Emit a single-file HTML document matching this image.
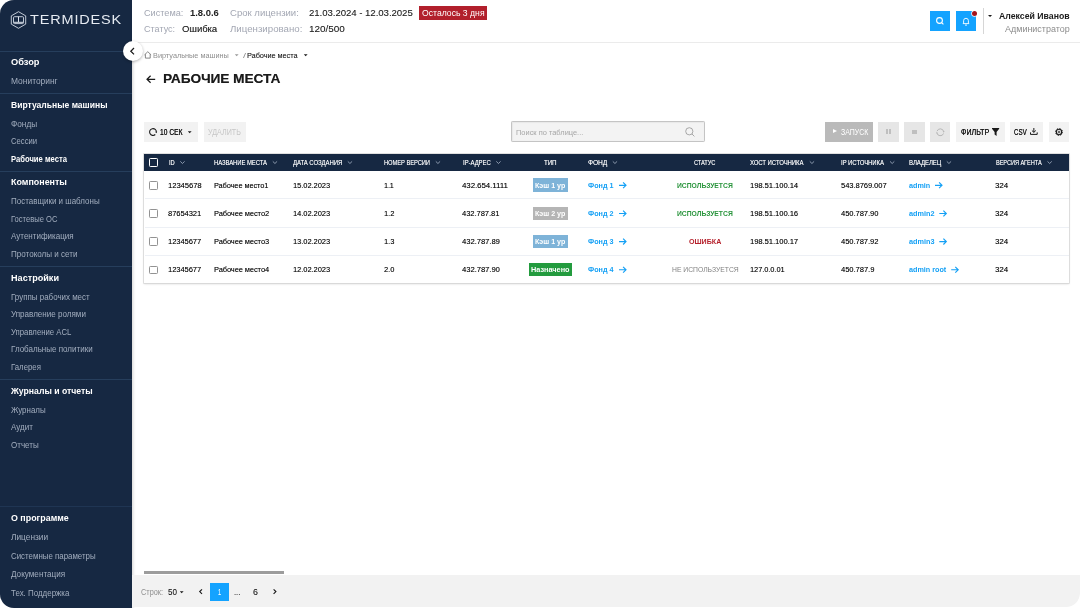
<!DOCTYPE html>
<html lang="ru">
<head>
<meta charset="utf-8">
<title>Termidesk — Рабочие места</title>
<style>
*{box-sizing:border-box;margin:0;padding:0}
html,body{width:1080px;height:608px;overflow:hidden;background:#fff;font-family:"Liberation Sans",sans-serif;color:#1a1a1a}
#app{position:absolute;left:0;top:0;width:1080px;height:608px;border-radius:14px;overflow:hidden;background:#fff}
.a{position:absolute}
.t{position:absolute;white-space:nowrap;line-height:1.2;transform-origin:0 50%}
svg{position:absolute;overflow:visible}
#side{position:absolute;left:0;top:0;width:132px;height:608px;background:#162842;box-shadow:1px 0 3px rgba(0,0,0,.18)}
.ln{position:absolute;left:0;width:132px;height:1px;background:#263e5c}
#hdr{position:absolute;left:132px;top:0;width:948px;height:43px;background:#fff;border-bottom:1px solid #ebebeb}
.sq{position:absolute;top:10.6px;width:20.3px;height:20.4px;background:#14a3ff}
.btn{position:absolute;top:121.6px;height:20.3px;background:#f2f2f2}
#tbl{position:absolute;left:143.9px;top:153.6px;width:924.9px;height:129.8px;background:#fff;box-shadow:0 0 0 0.7px #d4d4d4,0 1px 2px rgba(0,0,0,.16)}
#th{position:absolute;left:0;top:0;width:100%;height:17.1px;background:#162842}
.rl{position:absolute;left:144.5px;width:924px;height:1.3px;background:#edf0f5}
.cb{position:absolute;left:149px;width:8.6px;height:8.6px;border:1px solid #929292;border-radius:1.3px;background:#fff}
.tag{position:absolute;height:13.4px}
#ftr{position:absolute;left:132px;top:575px;width:948px;height:32.2px;background:#f2f2f2;border-bottom-right-radius:14px}
#tx{position:absolute;left:0;top:0;width:1080px;height:608px;will-change:transform}

</style>
</head>
<body>
<div id="app">
<!-- SIDEBAR -->
<div id="side">
  <div class="ln" style="top:50.5px"></div>
  <div class="ln" style="top:93.2px"></div>
  <div class="ln" style="top:170.9px"></div>
  <div class="ln" style="top:265.9px"></div>
  <div class="ln" style="top:378.9px"></div>
  <div class="ln" style="top:506px;background:#1f3553"></div>
</div>
<svg style="left:10px;top:11px" width="17" height="18" viewBox="0 0 17 18" fill="none" stroke="#dfe5ee" stroke-width="0.85">
  <path d="M8.5 0.7 L15.7 4.85 V13.15 L8.5 17.3 L1.3 13.15 V4.85 Z"/>
  <rect x="3.5" y="5.7" width="10" height="6.9" rx="1"/>
  <path d="M8.5 5.7 V11 M3.7 11.3 H13.3" stroke-width="1"/>
</svg>

<!-- HEADER -->
<div id="hdr"></div>
<div class="a" style="left:419px;top:6.2px;width:67.6px;height:13.4px;background:#b2202c"></div>
<div class="sq" style="left:930px"></div>
<svg style="left:936.4px;top:17.2px" width="8" height="8" viewBox="0 0 8 8" fill="none" stroke="#fff" stroke-width="1.1"><circle cx="3.5" cy="3.5" r="2.9"/><path d="M5.6 5.6 L7.4 7.4"/></svg>
<div class="sq" style="left:956px"></div>
<svg style="left:962px;top:16.6px" width="8" height="9" viewBox="0 0 8 9" fill="none" stroke="#fff" stroke-width="0.9"><path d="M1.6 6.4 V3.7 A2.4 2.4 0 0 1 6.4 3.7 V6.4 M0.8 6.6 H7.2 M3 8.1 H5"/></svg>
<div class="a" style="left:972.4px;top:11px;width:5px;height:5px;border-radius:50%;background:#a3141c;box-shadow:0 0 0 0.7px #fff"></div>
<div class="a" style="left:982.9px;top:7.5px;width:1px;height:26.4px;background:#d6d6d6"></div>
<svg style="left:988.1px;top:14.5px" width="5" height="3" viewBox="0 0 5 3"><path d="M0 0 H4.1 L2.05 2.1 Z" fill="#1a1a1a"/></svg>

<!-- COLLAPSE BUTTON -->
<div class="a" style="left:122.7px;top:41px;width:20px;height:20px;border-radius:50%;background:#fff;box-shadow:0 1px 3px rgba(0,0,0,.3)"></div>
<svg style="left:129px;top:47px" width="7" height="8" viewBox="0 0 7 8" fill="none" stroke="#1a1a1a" stroke-width="1.25"><path d="M5 1 L1.8 4.2 L5 7.4"/></svg>

<!-- BREADCRUMBS -->
<svg style="left:144.4px;top:51.2px" width="8" height="8" viewBox="0 0 8 8" fill="none" stroke="#7f7f7f" stroke-width="0.95" stroke-linejoin="round"><path d="M0.5 3.9 L3.8 0.7 L7.1 3.9 M1.4 3.2 V7.1 H6.2 V3.2"/></svg>
<svg style="left:235.0px;top:54.2px" width="4" height="2" viewBox="0 0 4 2"><path d="M-0.2 0.2 H3.6 L1.7 2.3 Z" fill="#9a9a9a"/></svg>
<svg style="left:303.9px;top:54.2px" width="4" height="2" viewBox="0 0 4 2"><path d="M-0.2 0.2 H3.6 L1.7 2.3 Z" fill="#1a1a1a"/></svg>

<!-- TITLE ARROW -->
<svg style="left:146px;top:74.8px" width="10" height="9" viewBox="0 0 10 9" fill="none" stroke="#1a1a1a" stroke-width="1.2"><path d="M9.2 4.3 H1.2 M4.6 0.8 L1 4.3 L4.6 7.8"/></svg>

<!-- TOOLBAR -->
<div class="btn" style="left:143.8px;width:54.6px"></div>
<svg style="left:148.8px;top:127.8px" width="8" height="8" viewBox="0 0 8 8" fill="none" stroke="#1a1a1a" stroke-width="1.05"><path d="M6.3 6.5 A3.4 3.4 0 1 1 7.37 4.3"/><path d="M6.2 3.7 H8.2 L7.3 5.3 Z" fill="#1a1a1a" stroke="none"/></svg>
<svg style="left:187.9px;top:131.2px" width="4" height="2" viewBox="0 0 4 2"><path d="M-0.2 0.2 H3.6 L1.7 2.3 Z" fill="#1a1a1a"/></svg>
<div class="btn" style="left:204.1px;width:41.8px"></div>

<div class="a" style="left:510.6px;top:121.3px;width:194.2px;height:20.6px;background:#f3f3f3;border:1px solid #c4c4c4;border-radius:1.2px;box-shadow:inset 0.5px 0.5px 1px rgba(0,0,0,.08)"></div>
<svg style="left:685px;top:126.8px" width="10" height="10" viewBox="0 0 10 10" fill="none" stroke="#8f8f8f" stroke-width="0.75"><circle cx="4.3" cy="4.3" r="3.6"/><path d="M7 7 L9.4 9.4"/></svg>

<div class="btn" style="left:825.4px;width:47.4px;background:#bababa"></div>
<div class="a" style="left:832.8px;top:129.3px;width:0;height:0;border-top:2.65px solid transparent;border-bottom:2.65px solid transparent;border-left:4.3px solid #fff"></div>
<div class="btn" style="left:878.2px;width:20.4px;background:#e6e6e6"></div>
<div class="a" style="left:885.9px;top:129.1px;width:2px;height:5.3px;background:#bfbfbf"></div>
<div class="a" style="left:889.1px;top:129.1px;width:2px;height:5.3px;background:#bfbfbf"></div>
<div class="btn" style="left:904.1px;width:20.5px;background:#e6e6e6"></div>
<div class="a" style="left:912.1px;top:129.7px;width:4.5px;height:4.4px;background:#bfbfbf"></div>
<div class="btn" style="left:930.1px;width:20.2px;background:#e6e6e6"></div>
<svg style="left:935.9px;top:127.7px" width="8.6" height="8.6" viewBox="0 0 9 9" fill="none" stroke="#b3b3b3" stroke-width="1"><path d="M1.12 3.27 A3.6 3.6 0 0 1 8.05 3.87 M7.88 5.73 A3.6 3.6 0 0 1 0.95 5.13"/><path d="M7.1 3.4 H9 L8.05 5 Z M0 5.6 H1.9 L0.95 4 Z" fill="#b3b3b3" stroke="none"/></svg>
<div class="btn" style="left:956px;width:48.8px"></div>
<svg style="left:992px;top:127.9px" width="8" height="8" viewBox="0 0 8 8" fill="#1a1a1a"><path d="M0 0 H7.2 V0.8 L4.6 3.9 V7.9 L2.6 6.6 V3.9 L0 0.8 Z"/></svg>
<div class="btn" style="left:1009.8px;width:33.6px"></div>
<svg style="left:1030.4px;top:128.2px" width="8" height="7" viewBox="0 0 8 7" fill="none" stroke="#1a1a1a" stroke-width="1"><path d="M3.85 0 V4.2 M1.9 2.5 L3.85 4.4 L5.8 2.5 M0.5 4.4 V6.4 H7.2 V4.4"/></svg>
<div class="btn" style="left:1048.8px;width:20.3px"></div>
<svg style="left:1054.9px;top:127.8px" width="8" height="8" viewBox="0 0 8 8" fill="none" stroke="#1a1a1a"><circle cx="4" cy="4" r="2.7" stroke-width="1.1"/><circle cx="4" cy="4" r="3.5" stroke-width="0.9" stroke-dasharray="1.3 1.45"/><circle cx="4" cy="4" r="0.9" stroke-width="0.8"/></svg>

<!-- TABLE -->
<div id="tbl">
  <div id="th"></div>
</div>
<div class="rl" style="top:198px"></div>
<div class="rl" style="top:226.6px"></div>
<div class="rl" style="top:254.9px"></div>
<div class="cb" style="top:158.2px;border:1.2px solid #fff;background:transparent"></div>
<div class="cb" style="top:181.1px"></div>
<div class="cb" style="top:209.3px"></div>
<div class="cb" style="top:237.4px"></div>
<div class="cb" style="top:265.6px"></div>
<div class="tag" style="left:533px;top:178.3px;width:34.8px;background:#7eb3d8"></div>
<div class="tag" style="left:533px;top:206.5px;width:34.8px;background:#b5b5b5"></div>
<div class="tag" style="left:533px;top:234.6px;width:34.8px;background:#7eb3d8"></div>
<div class="tag" style="left:528.8px;top:262.8px;width:43.2px;background:#239b3e"></div>
<svg width="1080" height="608" viewBox="0 0 1080 608" style="left:0;top:0" fill="none">
  <g stroke="#a9b6c9" stroke-width="0.8">
    <path transform="translate(180.3 161.4)" d="M0 0 L2.15 2.1 L4.3 0"/>
    <path transform="translate(272.8 161.4)" d="M0 0 L2.15 2.1 L4.3 0"/>
    <path transform="translate(347.8 161.4)" d="M0 0 L2.15 2.1 L4.3 0"/>
    <path transform="translate(435.8 161.4)" d="M0 0 L2.15 2.1 L4.3 0"/>
    <path transform="translate(496.3 161.4)" d="M0 0 L2.15 2.1 L4.3 0"/>
    <path transform="translate(612.8 161.4)" d="M0 0 L2.15 2.1 L4.3 0"/>
    <path transform="translate(809.8 161.4)" d="M0 0 L2.15 2.1 L4.3 0"/>
    <path transform="translate(890 161.4)" d="M0 0 L2.15 2.1 L4.3 0"/>
    <path transform="translate(946.8 161.4)" d="M0 0 L2.15 2.1 L4.3 0"/>
    <path transform="translate(1047.5 161.4)" d="M0 0 L2.15 2.1 L4.3 0"/>
  </g>
  <g stroke="#14a0f5" stroke-width="1.15">
    <path transform="translate(619 182.4)" d="M0 2.9 H6.8 M4.1 0 L7 2.9 L4.1 5.8"/>
    <path transform="translate(619 210.6)" d="M0 2.9 H6.8 M4.1 0 L7 2.9 L4.1 5.8"/>
    <path transform="translate(619 238.7)" d="M0 2.9 H6.8 M4.1 0 L7 2.9 L4.1 5.8"/>
    <path transform="translate(619 266.9)" d="M0 2.9 H6.8 M4.1 0 L7 2.9 L4.1 5.8"/>
    <path transform="translate(935 182.4)" d="M0 2.9 H6.8 M4.1 0 L7 2.9 L4.1 5.8"/>
    <path transform="translate(939.3 210.6)" d="M0 2.9 H6.8 M4.1 0 L7 2.9 L4.1 5.8"/>
    <path transform="translate(939.3 238.7)" d="M0 2.9 H6.8 M4.1 0 L7 2.9 L4.1 5.8"/>
    <path transform="translate(951.2 266.9)" d="M0 2.9 H6.8 M4.1 0 L7 2.9 L4.1 5.8"/>
  </g>
</svg>

<!-- FOOTER -->
<div class="a" style="left:143.8px;top:570.7px;width:140px;height:3.3px;background:#9c9c9c"></div>
<div id="ftr"></div>
<svg style="left:179.8px;top:591.2px" width="4" height="2" viewBox="0 0 4 2"><path d="M-0.2 0.2 H3.6 L1.7 2.3 Z" fill="#1a1a1a"/></svg>
<div class="a" style="left:210.4px;top:582.6px;width:18.5px;height:18.2px;background:#14a3ff"></div>
<svg style="left:198.5px;top:589.2px" width="4" height="6" viewBox="0 0 4 6" fill="none" stroke="#1a1a1a" stroke-width="1.15"><path d="M3 0.3 L0.7 2.6 L3 4.9"/></svg>
<svg style="left:272.8px;top:589.2px" width="4" height="6" viewBox="0 0 4 6" fill="none" stroke="#1a1a1a" stroke-width="1.15"><path d="M0.6 0.3 L2.9 2.6 L0.6 4.9"/></svg>

<!-- TEXT -->
<div id="tx">
<div class="t" style="left:10.58px;top:57.40px;font-size:9.1px;font-weight:700;color:#ffffff;transform:scaleX(1.0180)">Обзор</div>
<div class="t" style="left:10.61px;top:77.00px;font-size:8.15px;font-weight:400;color:#a2adbe;transform:scaleX(1.0357)">Мониторинг</div>
<div class="t" style="left:10.58px;top:100.40px;font-size:9.1px;font-weight:700;color:#ffffff;transform:scaleX(0.9406)">Виртуальные машины</div>
<div class="t" style="left:10.61px;top:119.90px;font-size:8.15px;font-weight:400;color:#a2adbe;transform:scaleX(1.0157)">Фонды</div>
<div class="t" style="left:10.61px;top:137.10px;font-size:8.15px;font-weight:400;color:#a2adbe;transform:scaleX(0.9484)">Сессии</div>
<div class="t" style="left:10.60px;top:153.90px;font-size:8.7px;font-weight:700;color:#ffffff;transform:scaleX(0.8789)">Рабочие места</div>
<div class="t" style="left:10.58px;top:177.30px;font-size:9.1px;font-weight:700;color:#ffffff;transform:scaleX(0.9817)">Компоненты</div>
<div class="t" style="left:10.61px;top:197.40px;font-size:8.15px;font-weight:400;color:#a2adbe;transform:scaleX(0.9823)">Поставщики и шаблоны</div>
<div class="t" style="left:10.61px;top:214.90px;font-size:8.15px;font-weight:400;color:#a2adbe;transform:scaleX(0.9337)">Гостевые ОС</div>
<div class="t" style="left:10.61px;top:232.30px;font-size:8.15px;font-weight:400;color:#a2adbe;transform:scaleX(0.9891)">Аутентификация</div>
<div class="t" style="left:10.61px;top:249.80px;font-size:8.15px;font-weight:400;color:#a2adbe;transform:scaleX(0.9907)">Протоколы и сети</div>
<div class="t" style="left:10.58px;top:272.80px;font-size:9.1px;font-weight:700;color:#ffffff;transform:scaleX(1.0001)">Настройки</div>
<div class="t" style="left:10.61px;top:292.90px;font-size:8.15px;font-weight:400;color:#a2adbe;transform:scaleX(0.9792)">Группы рабочих мест</div>
<div class="t" style="left:10.61px;top:310.40px;font-size:8.15px;font-weight:400;color:#a2adbe;transform:scaleX(0.9915)">Управление ролями</div>
<div class="t" style="left:10.61px;top:327.90px;font-size:8.15px;font-weight:400;color:#a2adbe;transform:scaleX(0.9555)">Управление ACL</div>
<div class="t" style="left:10.61px;top:345.40px;font-size:8.15px;font-weight:400;color:#a2adbe;transform:scaleX(0.9871)">Глобальные политики</div>
<div class="t" style="left:10.61px;top:362.90px;font-size:8.15px;font-weight:400;color:#a2adbe;transform:scaleX(0.9599)">Галерея</div>
<div class="t" style="left:10.58px;top:385.80px;font-size:9.1px;font-weight:700;color:#ffffff;transform:scaleX(0.9541)">Журналы и отчеты</div>
<div class="t" style="left:10.61px;top:405.90px;font-size:8.15px;font-weight:400;color:#a2adbe;transform:scaleX(0.9766)">Журналы</div>
<div class="t" style="left:10.61px;top:423.40px;font-size:8.15px;font-weight:400;color:#a2adbe;transform:scaleX(0.9908)">Аудит</div>
<div class="t" style="left:10.61px;top:440.90px;font-size:8.15px;font-weight:400;color:#a2adbe;transform:scaleX(0.9849)">Отчеты</div>
<div class="t" style="left:10.58px;top:512.60px;font-size:9.1px;font-weight:700;color:#ffffff;transform:scaleX(0.9765)">О программе</div>
<div class="t" style="left:10.61px;top:532.80px;font-size:8.15px;font-weight:400;color:#a2adbe;transform:scaleX(1.0254)">Лицензии</div>
<div class="t" style="left:10.61px;top:551.80px;font-size:8.15px;font-weight:400;color:#a2adbe;transform:scaleX(0.9711)">Системные параметры</div>
<div class="t" style="left:10.61px;top:569.70px;font-size:8.15px;font-weight:400;color:#a2adbe;transform:scaleX(1.0020)">Документация</div>
<div class="t" style="left:10.61px;top:588.70px;font-size:8.15px;font-weight:400;color:#a2adbe;transform:scaleX(0.9767)">Тех. Поддержка</div>
<div class="t" style="left:29.58px;top:13.20px;font-size:11.9px;font-weight:400;color:#e6ebf2;letter-spacing:0.7px;transform:scaleX(1.2175)">TERMIDESK</div>
<div class="t" style="left:143.70px;top:8.40px;font-size:8.7px;font-weight:400;color:#a3a7b3;transform:scaleX(1.0522)">Система:</div>
<div class="t" style="left:189.70px;top:8.40px;font-size:8.7px;font-weight:700;color:#222;transform:scaleX(1.0858)">1.8.0.6</div>
<div class="t" style="left:230.45px;top:8.40px;font-size:8.7px;font-weight:400;color:#a3a7b3;transform:scaleX(1.0984)">Срок лицензии:</div>
<div class="t" style="left:309.20px;top:8.40px;font-size:8.7px;font-weight:400;color:#222;text-shadow:0.3px 0 0 rgba(34,34,34,.3);transform:scaleX(1.0953)">21.03.2024 - 12.03.2025</div>
<div class="t" style="left:421.71px;top:9.00px;font-size:8.3px;font-weight:400;color:#ffffff;transform:scaleX(1.0414)">Осталось 3 дня</div>
<div class="t" style="left:143.70px;top:24.30px;font-size:8.7px;font-weight:400;color:#a3a7b3;transform:scaleX(1.0408)">Статус:</div>
<div class="t" style="left:182.45px;top:24.30px;font-size:8.7px;font-weight:400;color:#222;text-shadow:0.3px 0 0 rgba(34,34,34,.45);transform:scaleX(1.0839)">Ошибка</div>
<div class="t" style="left:230.45px;top:24.30px;font-size:8.7px;font-weight:400;color:#a3a7b3;transform:scaleX(1.1140)">Лицензировано:</div>
<div class="t" style="left:309.45px;top:24.30px;font-size:8.7px;font-weight:400;color:#222;text-shadow:0.3px 0 0 rgba(34,34,34,.3);transform:scaleX(1.1338)">120/500</div>
<div class="t" style="left:998.60px;top:11.20px;font-size:8.7px;font-weight:700;color:#1a1a1a;transform:scaleX(1.0035)">Алексей Иванов</div>
<div class="t" style="left:1004.50px;top:23.60px;font-size:8.5px;font-weight:400;color:#8c8c8c;transform:scaleX(1.0549)">Администратор</div>
<div class="t" style="left:153.48px;top:51.00px;font-size:7.6px;font-weight:400;color:#8e8e8e;transform:scaleX(0.9633)">Виртуальные машины</div>
<div class="t" style="left:243.49px;top:52.00px;font-size:7.3px;font-weight:400;color:#8a8a8a;transform:scaleX(1.4823)">/</div>
<div class="t" style="left:247.48px;top:51.00px;font-size:7.6px;font-weight:400;color:#1a1a1a;text-shadow:0.3px 0 0 rgba(26,26,26,.35);transform:scaleX(0.9563)">Рабочие места</div>
<div class="t" style="left:162.84px;top:71.30px;font-size:13.0px;font-weight:700;color:#1a1a1a;text-shadow:0.3px 0 0 rgba(26,26,26,.6);transform:scaleX(1.0445)">РАБОЧИЕ МЕСТА</div>
<div class="t" style="left:159.71px;top:127.70px;font-size:8.3px;font-weight:400;color:#1a1a1a;text-shadow:0.12px 0 0 #1a1a1a;transform:scaleX(0.8056)">10 СЕК</div>
<div class="t" style="left:208.21px;top:127.70px;font-size:8.3px;font-weight:400;color:#c6c6c6;transform:scaleX(0.8604)">УДАЛИТЬ</div>
<div class="t" style="left:516.47px;top:127.50px;font-size:8.1px;font-weight:400;color:#a6a6a6;transform:scaleX(0.9190)">Поиск по таблице...</div>
<div class="t" style="left:840.96px;top:127.70px;font-size:8.3px;font-weight:400;color:#ffffff;transform:scaleX(0.8375)">ЗАПУСК</div>
<div class="t" style="left:960.61px;top:127.70px;font-size:8.3px;font-weight:400;color:#1a1a1a;text-shadow:0.12px 0 0 #1a1a1a;transform:scaleX(0.8556)">ФИЛЬТР</div>
<div class="t" style="left:1014.46px;top:127.70px;font-size:8.3px;font-weight:400;color:#1a1a1a;text-shadow:0.12px 0 0 #1a1a1a;transform:scaleX(0.7461)">CSV</div>
<div class="t" style="left:168.78px;top:158.75px;font-size:6.4px;font-weight:400;color:#ffffff;text-shadow:0.25px 0 0 rgba(255,255,255,.5);transform:scaleX(0.8816)">ID</div>
<div class="t" style="left:213.78px;top:158.75px;font-size:6.4px;font-weight:400;color:#ffffff;text-shadow:0.25px 0 0 rgba(255,255,255,.5);transform:scaleX(0.9102)">НАЗВАНИЕ МЕСТА</div>
<div class="t" style="left:293.03px;top:158.75px;font-size:6.4px;font-weight:400;color:#ffffff;text-shadow:0.25px 0 0 rgba(255,255,255,.5);transform:scaleX(0.9188)">ДАТА СОЗДАНИЯ</div>
<div class="t" style="left:383.78px;top:158.75px;font-size:6.4px;font-weight:400;color:#ffffff;text-shadow:0.25px 0 0 rgba(255,255,255,.5);transform:scaleX(0.8882)">НОМЕР ВЕРСИИ</div>
<div class="t" style="left:462.53px;top:158.75px;font-size:6.4px;font-weight:400;color:#ffffff;text-shadow:0.25px 0 0 rgba(255,255,255,.5);transform:scaleX(0.9199)">IP-АДРЕС</div>
<div class="t" style="left:544.03px;top:158.75px;font-size:6.4px;font-weight:400;color:#ffffff;text-shadow:0.25px 0 0 rgba(255,255,255,.5);transform:scaleX(0.9507)">ТИП</div>
<div class="t" style="left:588.03px;top:158.75px;font-size:6.4px;font-weight:400;color:#ffffff;text-shadow:0.25px 0 0 rgba(255,255,255,.5);transform:scaleX(1.0222)">ФОНД</div>
<div class="t" style="left:694.28px;top:158.75px;font-size:6.4px;font-weight:400;color:#ffffff;text-shadow:0.25px 0 0 rgba(255,255,255,.5);transform:scaleX(0.8674)">СТАТУС</div>
<div class="t" style="left:750.03px;top:158.75px;font-size:6.4px;font-weight:400;color:#ffffff;text-shadow:0.25px 0 0 rgba(255,255,255,.5);transform:scaleX(0.9215)">ХОСТ ИСТОЧНИКА</div>
<div class="t" style="left:841.03px;top:158.75px;font-size:6.4px;font-weight:400;color:#ffffff;text-shadow:0.25px 0 0 rgba(255,255,255,.5);transform:scaleX(0.9218)">IP ИСТОЧНИКА</div>
<div class="t" style="left:908.78px;top:158.75px;font-size:6.4px;font-weight:400;color:#ffffff;text-shadow:0.25px 0 0 rgba(255,255,255,.5);transform:scaleX(0.9295)">ВЛАДЕЛЕЦ</div>
<div class="t" style="left:995.68px;top:158.75px;font-size:6.4px;font-weight:400;color:#ffffff;text-shadow:0.25px 0 0 rgba(255,255,255,.5);transform:scaleX(0.8633)">ВЕРСИЯ АГЕНТА</div>
<div class="t" style="left:168.48px;top:181.00px;font-size:7.7px;font-weight:400;color:#0a0a0a;text-shadow:0.3px 0 0 rgba(10,10,10,.5);transform:scaleX(0.9801)">12345678</div>
<div class="t" style="left:213.73px;top:181.00px;font-size:7.7px;font-weight:400;color:#0a0a0a;text-shadow:0.3px 0 0 rgba(10,10,10,.5);transform:scaleX(0.9401)">Рабочее место1</div>
<div class="t" style="left:293.48px;top:181.00px;font-size:7.7px;font-weight:400;color:#0a0a0a;text-shadow:0.3px 0 0 rgba(10,10,10,.5);transform:scaleX(0.9624)">15.02.2023</div>
<div class="t" style="left:384.03px;top:181.00px;font-size:7.7px;font-weight:400;color:#0a0a0a;text-shadow:0.3px 0 0 rgba(10,10,10,.5);transform:scaleX(0.9113)">1.1</div>
<div class="t" style="left:462.48px;top:181.00px;font-size:7.7px;font-weight:400;color:#0a0a0a;text-shadow:0.3px 0 0 rgba(10,10,10,.5);transform:scaleX(1.0105)">432.654.1111</div>
<div class="t" style="left:587.99px;top:181.00px;font-size:7.5px;font-weight:700;color:#14a0f5;transform:scaleX(0.9621)">Фонд 1</div>
<div class="t" style="left:750.48px;top:181.00px;font-size:7.7px;font-weight:400;color:#0a0a0a;text-shadow:0.3px 0 0 rgba(10,10,10,.5);transform:scaleX(0.9770)">198.51.100.14</div>
<div class="t" style="left:840.98px;top:181.00px;font-size:7.7px;font-weight:400;color:#0a0a0a;text-shadow:0.3px 0 0 rgba(10,10,10,.5);transform:scaleX(0.9683)">543.8769.007</div>
<div class="t" style="left:908.74px;top:181.00px;font-size:7.5px;font-weight:700;color:#14a0f5;transform:scaleX(0.9629)">admin</div>
<div class="t" style="left:995.48px;top:181.00px;font-size:7.7px;font-weight:400;color:#0a0a0a;text-shadow:0.3px 0 0 rgba(10,10,10,.5);transform:scaleX(1.0164)">324</div>
<div class="t" style="left:168.48px;top:209.20px;font-size:7.7px;font-weight:400;color:#0a0a0a;text-shadow:0.3px 0 0 rgba(10,10,10,.5);transform:scaleX(0.9655)">87654321</div>
<div class="t" style="left:213.73px;top:209.20px;font-size:7.7px;font-weight:400;color:#0a0a0a;text-shadow:0.3px 0 0 rgba(10,10,10,.5);transform:scaleX(0.9531)">Рабочее место2</div>
<div class="t" style="left:293.48px;top:209.20px;font-size:7.7px;font-weight:400;color:#0a0a0a;text-shadow:0.3px 0 0 rgba(10,10,10,.5);transform:scaleX(0.9624)">14.02.2023</div>
<div class="t" style="left:384.03px;top:209.20px;font-size:7.7px;font-weight:400;color:#0a0a0a;text-shadow:0.3px 0 0 rgba(10,10,10,.5);transform:scaleX(0.9580)">1.2</div>
<div class="t" style="left:462.48px;top:209.20px;font-size:7.7px;font-weight:400;color:#0a0a0a;text-shadow:0.3px 0 0 rgba(10,10,10,.5);transform:scaleX(0.9689)">432.787.81</div>
<div class="t" style="left:587.99px;top:209.20px;font-size:7.5px;font-weight:700;color:#14a0f5;transform:scaleX(0.9621)">Фонд 2</div>
<div class="t" style="left:750.48px;top:209.20px;font-size:7.7px;font-weight:400;color:#0a0a0a;text-shadow:0.3px 0 0 rgba(10,10,10,.5);transform:scaleX(0.9770)">198.51.100.16</div>
<div class="t" style="left:840.98px;top:209.20px;font-size:7.7px;font-weight:400;color:#0a0a0a;text-shadow:0.3px 0 0 rgba(10,10,10,.5);transform:scaleX(0.9689)">450.787.90</div>
<div class="t" style="left:908.74px;top:209.20px;font-size:7.5px;font-weight:700;color:#14a0f5;transform:scaleX(0.9718)">admin2</div>
<div class="t" style="left:995.48px;top:209.20px;font-size:7.7px;font-weight:400;color:#0a0a0a;text-shadow:0.3px 0 0 rgba(10,10,10,.5);transform:scaleX(1.0164)">324</div>
<div class="t" style="left:168.48px;top:237.40px;font-size:7.7px;font-weight:400;color:#0a0a0a;text-shadow:0.3px 0 0 rgba(10,10,10,.5);transform:scaleX(0.9655)">12345677</div>
<div class="t" style="left:213.73px;top:237.40px;font-size:7.7px;font-weight:400;color:#0a0a0a;text-shadow:0.3px 0 0 rgba(10,10,10,.5);transform:scaleX(0.9531)">Рабочее место3</div>
<div class="t" style="left:293.48px;top:237.40px;font-size:7.7px;font-weight:400;color:#0a0a0a;text-shadow:0.3px 0 0 rgba(10,10,10,.5);transform:scaleX(0.9624)">13.02.2023</div>
<div class="t" style="left:384.03px;top:237.40px;font-size:7.7px;font-weight:400;color:#0a0a0a;text-shadow:0.3px 0 0 rgba(10,10,10,.5);transform:scaleX(0.9580)">1.3</div>
<div class="t" style="left:462.48px;top:237.40px;font-size:7.7px;font-weight:400;color:#0a0a0a;text-shadow:0.3px 0 0 rgba(10,10,10,.5);transform:scaleX(0.9819)">432.787.89</div>
<div class="t" style="left:587.99px;top:237.40px;font-size:7.5px;font-weight:700;color:#14a0f5;transform:scaleX(0.9621)">Фонд 3</div>
<div class="t" style="left:750.48px;top:237.40px;font-size:7.7px;font-weight:400;color:#0a0a0a;text-shadow:0.3px 0 0 rgba(10,10,10,.5);transform:scaleX(0.9770)">198.51.100.17</div>
<div class="t" style="left:840.98px;top:237.40px;font-size:7.7px;font-weight:400;color:#0a0a0a;text-shadow:0.3px 0 0 rgba(10,10,10,.5);transform:scaleX(0.9689)">450.787.92</div>
<div class="t" style="left:908.74px;top:237.40px;font-size:7.5px;font-weight:700;color:#14a0f5;transform:scaleX(0.9718)">admin3</div>
<div class="t" style="left:995.48px;top:237.40px;font-size:7.7px;font-weight:400;color:#0a0a0a;text-shadow:0.3px 0 0 rgba(10,10,10,.5);transform:scaleX(1.0164)">324</div>
<div class="t" style="left:168.48px;top:265.30px;font-size:7.7px;font-weight:400;color:#0a0a0a;text-shadow:0.3px 0 0 rgba(10,10,10,.5);transform:scaleX(0.9655)">12345677</div>
<div class="t" style="left:213.73px;top:265.30px;font-size:7.7px;font-weight:400;color:#0a0a0a;text-shadow:0.3px 0 0 rgba(10,10,10,.5);transform:scaleX(0.9531)">Рабочее место4</div>
<div class="t" style="left:293.48px;top:265.30px;font-size:7.7px;font-weight:400;color:#0a0a0a;text-shadow:0.3px 0 0 rgba(10,10,10,.5);transform:scaleX(0.9624)">12.02.2023</div>
<div class="t" style="left:384.03px;top:265.30px;font-size:7.7px;font-weight:400;color:#0a0a0a;text-shadow:0.3px 0 0 rgba(10,10,10,.5);transform:scaleX(0.9580)">2.0</div>
<div class="t" style="left:462.48px;top:265.30px;font-size:7.7px;font-weight:400;color:#0a0a0a;text-shadow:0.3px 0 0 rgba(10,10,10,.5);transform:scaleX(0.9819)">432.787.90</div>
<div class="t" style="left:587.99px;top:265.30px;font-size:7.5px;font-weight:700;color:#14a0f5;transform:scaleX(0.9621)">Фонд 4</div>
<div class="t" style="left:750.48px;top:265.30px;font-size:7.7px;font-weight:400;color:#0a0a0a;text-shadow:0.3px 0 0 rgba(10,10,10,.5);transform:scaleX(0.9503)">127.0.0.01</div>
<div class="t" style="left:840.98px;top:265.30px;font-size:7.7px;font-weight:400;color:#0a0a0a;text-shadow:0.3px 0 0 rgba(10,10,10,.5);transform:scaleX(0.9733)">450.787.9</div>
<div class="t" style="left:908.74px;top:265.30px;font-size:7.5px;font-weight:700;color:#14a0f5;transform:scaleX(0.9619)">admin root</div>
<div class="t" style="left:995.48px;top:265.30px;font-size:7.7px;font-weight:400;color:#0a0a0a;text-shadow:0.3px 0 0 rgba(10,10,10,.5);transform:scaleX(1.0164)">324</div>
<div class="t" style="left:535.49px;top:182.00px;font-size:7.4px;font-weight:700;color:#ffffff;transform:scaleX(0.9609)">Кэш 1 ур</div>
<div class="t" style="left:535.49px;top:210.20px;font-size:7.4px;font-weight:700;color:#ffffff;transform:scaleX(0.9609)">Кэш 2 ур</div>
<div class="t" style="left:535.49px;top:238.40px;font-size:7.4px;font-weight:700;color:#ffffff;transform:scaleX(0.9609)">Кэш 1 ур</div>
<div class="t" style="left:531.24px;top:266.30px;font-size:7.4px;font-weight:700;color:#ffffff;transform:scaleX(0.9880)">Назначено</div>
<div class="t" style="left:677.00px;top:182.00px;font-size:7.2px;font-weight:700;color:#2a953d;transform:scaleX(0.9415)">ИСПОЛЬЗУЕТСЯ</div>
<div class="t" style="left:677.00px;top:210.20px;font-size:7.2px;font-weight:700;color:#2a953d;transform:scaleX(0.9415)">ИСПОЛЬЗУЕТСЯ</div>
<div class="t" style="left:688.75px;top:238.40px;font-size:7.2px;font-weight:700;color:#b5202b;transform:scaleX(0.9853)">ОШИБКА</div>
<div class="t" style="left:671.50px;top:266.30px;font-size:7.2px;font-weight:400;color:#828282;transform:scaleX(0.9433)">НЕ ИСПОЛЬЗУЕТСЯ</div>
<div class="t" style="left:141.30px;top:586.50px;font-size:8.6px;font-weight:400;color:#8f8f8f;transform:scaleX(0.8508)">Строк:</div>
<div class="t" style="left:168.45px;top:586.50px;font-size:8.6px;font-weight:400;color:#1a1a1a;text-shadow:0.3px 0 0 rgba(26,26,26,.35);transform:scaleX(0.9257)">50</div>
<div class="t" style="left:218.30px;top:586.50px;font-size:8.6px;font-weight:400;color:#ffffff;transform:scaleX(0.6697)">1</div>
<div class="t" style="left:234.45px;top:586.50px;font-size:8.6px;font-weight:400;color:#1a1a1a;transform:scaleX(0.8857)">...</div>
<div class="t" style="left:253.20px;top:586.50px;font-size:8.6px;font-weight:400;color:#1a1a1a;text-shadow:0.3px 0 0 rgba(26,26,26,.35);transform:scaleX(1.0148)">6</div>
</div>
</div>
</body>
</html>
